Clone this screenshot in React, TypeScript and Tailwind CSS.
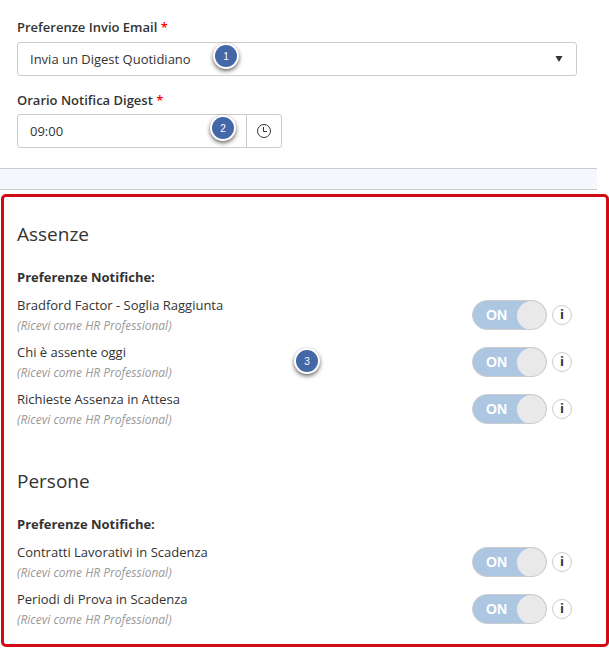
type Preference = { id: string; label: string };

const sections: { title: string; items: Preference[] }[] = [
  {
    title: 'Assenze',
    items: [
      { id: 'bradford', label: 'Bradford Factor - Soglia Raggiunta' },
      { id: 'assente-oggi', label: 'Chi è assente oggi' },
      { id: 'richieste', label: 'Richieste Assenza in Attesa' },
    ],
  },
  {
    title: 'Persone',
    items: [
      { id: 'contratti', label: 'Contratti Lavorativi in Scadenza' },
      { id: 'prova', label: 'Periodi di Prova in Scadenza' },
    ],
  },
];

const StepBadge = ({ step, className }: { step: number; className: string }) => (
  <span
    className={`absolute flex size-[26px] items-center justify-center rounded-full border-2 border-white bg-[#4467a8] font-['Liberation_Sans',sans-serif] text-[10px] text-white shadow-[0_2px_4px_rgba(0,0,0,0.6)] ${className}`}
  >
    {step}
  </span>
);

const Required = () => <span className="text-[#ff0000]">*</span>;

const Toggle = ({ id }: { id: string }) => (
  <span className="relative flex h-[30px] w-[75px] items-center overflow-hidden rounded-full border border-[#cccccc] bg-[#adc6e2]">
    <input
      id={id}
      type="checkbox"
      role="switch"
      defaultChecked
      className="absolute inset-0 cursor-pointer opacity-0"
    />
    <span className="pointer-events-none flex-1 pl-[13px] font-['Liberation_Sans',sans-serif] text-sm font-bold text-white">
      ON
    </span>
    <span className="pointer-events-none size-[29px] rounded-full bg-[#e9e9e9]" />
  </span>
);

const PreferenceRow = ({ id, label }: Preference) => (
  <li className="flex h-[47px] items-start justify-between">
    <label htmlFor={id}>
      <span className="block leading-[18px]">{label}</span>
      <span className="mt-[3px] block text-xs leading-[18px] text-[#999999] italic">
        (Ricevi come HR Professional)
      </span>
    </label>
    <div className="flex items-center gap-[5px] pt-1">
      <Toggle id={id} />
      <button
        type="button"
        aria-label={`Informazioni: ${label}`}
        className="flex size-5 items-center justify-center rounded-full border border-[#cccccc] text-[13px] font-bold"
      >
        i
      </button>
    </div>
  </li>
);

export default function App() {
  return (
    <main className="bg-white pb-[9px] font-['Open_Sans',sans-serif] text-[13px] text-[#333333]">
      <form className="pt-[17px] pr-8 pb-5 pl-[17px]">
        <label htmlFor="email-pref" className="block leading-5 font-semibold">
          Preferenze Invio Email <Required />
        </label>
        <div className="relative mt-[5px]">
          <select
            id="email-pref"
            className="block h-[34px] w-full appearance-none rounded-[3px] border border-[#cccccc] bg-white px-3 pt-0.5"
          >
            <option>Invia un Digest Quotidiano</option>
          </select>
          <svg
            viewBox="0 0 8 6"
            className="pointer-events-none absolute top-[14px] right-[14px] h-1.5 w-2"
            fill="#333333"
          >
            <path d="M0.5 0h7L4 6z" />
          </svg>
          <StepBadge step={1} className="top-px left-[196px]" />
        </div>

        <label htmlFor="digest-time" className="mt-[14px] block leading-5 font-semibold">
          Orario Notifica Digest <Required />
        </label>
        <div className="relative mt-1 flex h-[34px] w-[265px] rounded-[3px] border border-[#cccccc]">
          <input
            id="digest-time"
            type="text"
            defaultValue="09:00"
            className="min-w-0 flex-1 px-3 pt-0.5"
          />
          <button
            type="button"
            aria-label="Scegli orario"
            className="flex w-[35px] items-center justify-center border-l border-[#cccccc]"
          >
            <svg viewBox="0 0 16 16" className="size-4" fill="none" stroke="#333333">
              <circle cx="8" cy="8" r="6.5" />
              <path d="M7.5 4v4.5H11" />
            </svg>
          </button>
          <StepBadge step={2} className="top-0 left-48" />
        </div>
      </form>

      <div className="mr-3 h-[22px] border-y border-[#cccccc] bg-[#f4f7fb]" />

      <div className="relative mt-1 ml-px rounded-[5px] border-[3px] border-[#d20a11] pt-[23px] pr-[34px] pb-[7px] pl-[13px]">
        {sections.map(({ title, items }) => (
          <section key={title} className="mb-[30px] last-of-type:mb-0">
            <h2 className="text-[19px] leading-7">{title}</h2>
            <h3 className="mt-[19px] mb-[9px] leading-5 font-bold">Preferenze Notifiche:</h3>
            <ul>
              {items.map((item) => (
                <PreferenceRow key={item.id} {...item} />
              ))}
            </ul>
          </section>
        ))}
        <StepBadge step={3} className="top-[151px] left-[290px]" />
      </div>
    </main>
  );
}
